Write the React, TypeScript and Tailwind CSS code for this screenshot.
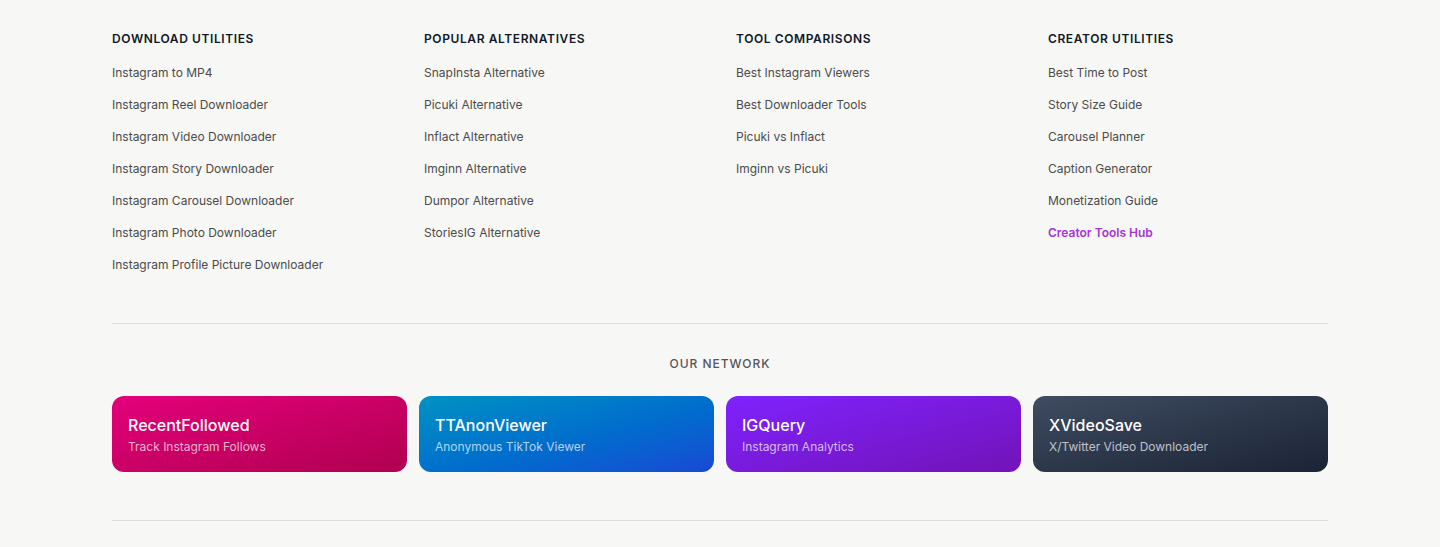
import React from 'react'

const columns = [
  {
    title: 'Download Utilities',
    links: [
      'Instagram to MP4',
      'Instagram Reel Downloader',
      'Instagram Video Downloader',
      'Instagram Story Downloader',
      'Instagram Carousel Downloader',
      'Instagram Photo Downloader',
      'Instagram Profile Picture Downloader',
    ],
  },
  {
    title: 'Popular Alternatives',
    links: [
      'SnapInsta Alternative',
      'Picuki Alternative',
      'Inflact Alternative',
      'Imginn Alternative',
      'Dumpor Alternative',
      'StoriesIG Alternative',
    ],
  },
  {
    title: 'Tool Comparisons',
    links: ['Best Instagram Viewers', 'Best Downloader Tools', 'Picuki vs Inflact', 'Imginn vs Picuki'],
  },
  {
    title: 'Creator Utilities',
    links: ['Best Time to Post', 'Story Size Guide', 'Carousel Planner', 'Caption Generator', 'Monetization Guide'],
    highlight: 'Creator Tools Hub',
  },
]

const network = [
  { name: 'RecentFollowed', tagline: 'Track Instagram Follows', className: 'from-[#e4007b] to-[#b00050]' },
  { name: 'TTAnonViewer', tagline: 'Anonymous TikTok Viewer', className: 'from-[#0092c2] to-[#1848d4]' },
  { name: 'IGQuery', tagline: 'Instagram Analytics', className: 'from-[#7f22fe] to-[#7212b8]' },
  { name: 'XVideoSave', tagline: 'X/Twitter Video Downloader', className: 'from-[#3f4c61] to-[#1b2435]' },
]

export default function App() {
  return (
    <div className="min-h-screen bg-[#f7f7f5] font-[Inter,sans-serif]">
      <div className="mx-auto max-w-7xl px-8 pt-[31px]">
        <div className="grid grid-cols-4 gap-8">
          {columns.map((col) => (
            <div key={col.title}>
              <h3 className="text-[12px] font-semibold uppercase leading-4 tracking-[0.05em] text-gray-900">
                {col.title}
              </h3>
              <ul className="mt-4 flex flex-col gap-3">
                {col.links.map((link) => (
                  <li key={link} className="text-[12px] leading-5">
                    <a href="#" className="text-[#4b4b4b] hover:text-gray-900">
                      {link}
                    </a>
                  </li>
                ))}
                {col.highlight && (
                  <li className="text-[12px] leading-5">
                    <a href="#" className="font-semibold text-[#a534d8]">
                      {col.highlight}
                    </a>
                  </li>
                )}
              </ul>
            </div>
          ))}
        </div>

        <div className="mt-12 border-t border-[#dcdcda] pt-8">
          <p className="text-center text-[12px] font-medium uppercase leading-4 tracking-[0.08em] text-[#555]">
            Our Network
          </p>
          <div className="mt-6 grid grid-cols-4 gap-3">
            {network.map((site) => (
              <a
                key={site.name}
                href="#"
                className={`flex h-[76px] flex-col justify-center rounded-xl bg-gradient-to-br px-4 ${site.className}`}
              >
                <span className="text-[16px] font-medium leading-6 text-white">{site.name}</span>
                <span className="mt-[2px] text-[12px] leading-4 text-white/70">{site.tagline}</span>
              </a>
            ))}
          </div>
        </div>

        <div className="mt-12 border-t border-[#dcdcda] pb-8" />
      </div>
    </div>
  )
}
